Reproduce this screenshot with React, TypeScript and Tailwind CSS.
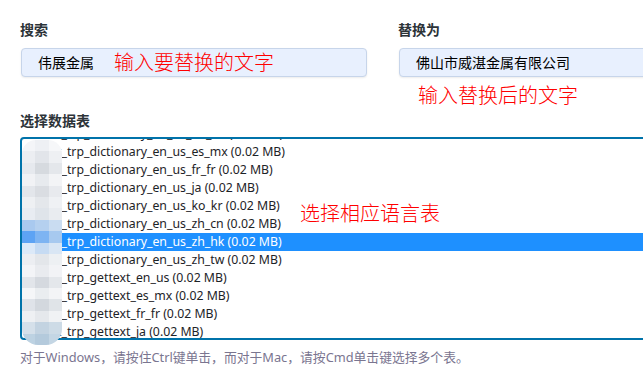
import React from 'react';

const rows = [
  't_trp_dictionary_en_us_de_de (0.02 MB)',
  't_trp_dictionary_en_us_es_mx (0.02 MB)',
  't_trp_dictionary_en_us_fr_fr (0.02 MB)',
  't_trp_dictionary_en_us_ja (0.02 MB)',
  't_trp_dictionary_en_us_ko_kr (0.02 MB)',
  't_trp_dictionary_en_us_zh_cn (0.02 MB)',
  't_trp_dictionary_en_us_zh_hk (0.02 MB)',
  't_trp_dictionary_en_us_zh_tw (0.02 MB)',
  't_trp_gettext_en_us (0.02 MB)',
  't_trp_gettext_es_mx (0.02 MB)',
  't_trp_gettext_fr_fr (0.02 MB)',
  't_trp_gettext_ja (0.02 MB)',
];

// mosaic colours for the blurred prefix, 3 per row
const mosaic = [
  ['#f4f5f8', '#eef0f4', '#f6f7f9'],
  ['#eceef2', '#e2e5ea', '#eef0f3'],
  ['#e6e9ee', '#d6dadf', '#e4e7eb'],
  ['#f1f2f5', '#e7eaee', '#f3f4f6'],
  ['#e3e6eb', '#dadde2', '#e8eaee'],
  ['#eef0f3', '#e4e7eb', '#eff1f4'],
  ['#e8ecf2', '#dfe4ea', '#e9ecf0'],
  ['#a9c9ef', '#b5d0ef', '#c9dcf1'],
  ['#5da3f4', '#7eb4f2', '#a7c9ef'],
  ['#dce9f8', '#c6dbf3', '#d9e6f4'],
  ['#eceef2', '#e3e6ea', '#edf0f3'],
  ['#f3f4f7', '#e9ebef', '#f2f3f6'],
  ['#e2e5ea', '#d5d9df', '#e4e7eb'],
  ['#f5f6f8', '#eaedf0', '#f3f4f6'],
  ['#dfe3e9', '#d3d8de', '#e0e4e8'],
  ['#eef0f3', '#e5e8ec', '#f0f2f4'],
  ['#d5e0ea', '#c3d3e1', '#cddbe6'],
  ['#bdd2e2', '#b4cadc', '#c4d6e4'],
];

const note = { fontFamily: '"Noto Sans CJK SC", sans-serif' };

export default function App() {
  return (
    <div
      className="relative w-[643px] h-[377px] overflow-hidden bg-white pl-5 pt-[20px] text-[#1d2327]"
      style={{ fontFamily: '"Noto Sans", "Noto Sans CJK SC", sans-serif' }}
    >
      <div className="flex gap-[31px]">
        <div className="w-[347px] shrink-0">
          <div className="text-[14px] font-semibold leading-[20px] text-[#2c3338]">搜索</div>
          <div className="mt-[8px] ml-px h-[29px] rounded-[4px] border border-[#c7d5ea] bg-[#e8f0fe] pl-4 text-[14px] leading-[27px] text-black shadow-[0_1px_2px_rgba(0,0,0,0.08)]">
            伟展金属
          </div>
        </div>
        <div className="w-[347px] shrink-0">
          <div className="text-[14px] font-semibold leading-[20px] text-[#2c3338]">替换为</div>
          <div className="mt-[8px] ml-px h-[29px] rounded-[4px] border border-[#c7d5ea] bg-[#e8f0fe] pl-4 text-[14px] leading-[27px] text-black shadow-[0_1px_2px_rgba(0,0,0,0.08)]">
            佛山市威湛金属有限公司
          </div>
        </div>
      </div>

      <div className="mt-[34px] text-[14px] font-semibold leading-[20px] text-[#2c3338]">选择数据表</div>
      <div className="relative mt-[6px] h-[203px] w-[700px] overflow-hidden rounded-[4px] border-2 border-[#0073aa] text-[12.3px] text-[#1d2327]">
        <div className="-mt-[14px]">
          {rows.map((r, i) => (
            <div
              key={r}
              className={`h-[18px] pl-[35px] leading-[18px] whitespace-nowrap ${i === 6 ? 'bg-[#1e90ff] text-white' : ''}`}
            >
              {r}
            </div>
          ))}
        </div>
      </div>
      <div className="mt-[8px] text-[12.8px] leading-[18px] text-[#7a7590]">
        对于Windows，请按住Ctrl键单击，而对于Mac，请按Cmd单击键选择多个表。
      </div>

      {/* blurred prefix */}
      <div className="absolute left-[22px] top-[140px] grid w-[40px] grid-cols-3 overflow-hidden rounded-t-[14px] rounded-b-[16px]">
        {mosaic.flat().map((c, i) => (
          <div key={i} className="h-[11.4px]" style={{ background: c }} />
        ))}
      </div>

      {/* annotations */}
      <div className="absolute left-[114px] top-[49px] text-[20px] font-light leading-[26px] text-[#ff0000]" style={note}>
        输入要替换的文字
      </div>
      <div className="absolute left-[418px] top-[82px] text-[20px] font-light leading-[26px] text-[#ff0000]" style={note}>
        输入替换后的文字
      </div>
      <div className="absolute left-[300px] top-[200px] text-[20px] font-light leading-[26px] text-[#ff0000]" style={note}>
        选择相应语言表
      </div>
    </div>
  );
}
